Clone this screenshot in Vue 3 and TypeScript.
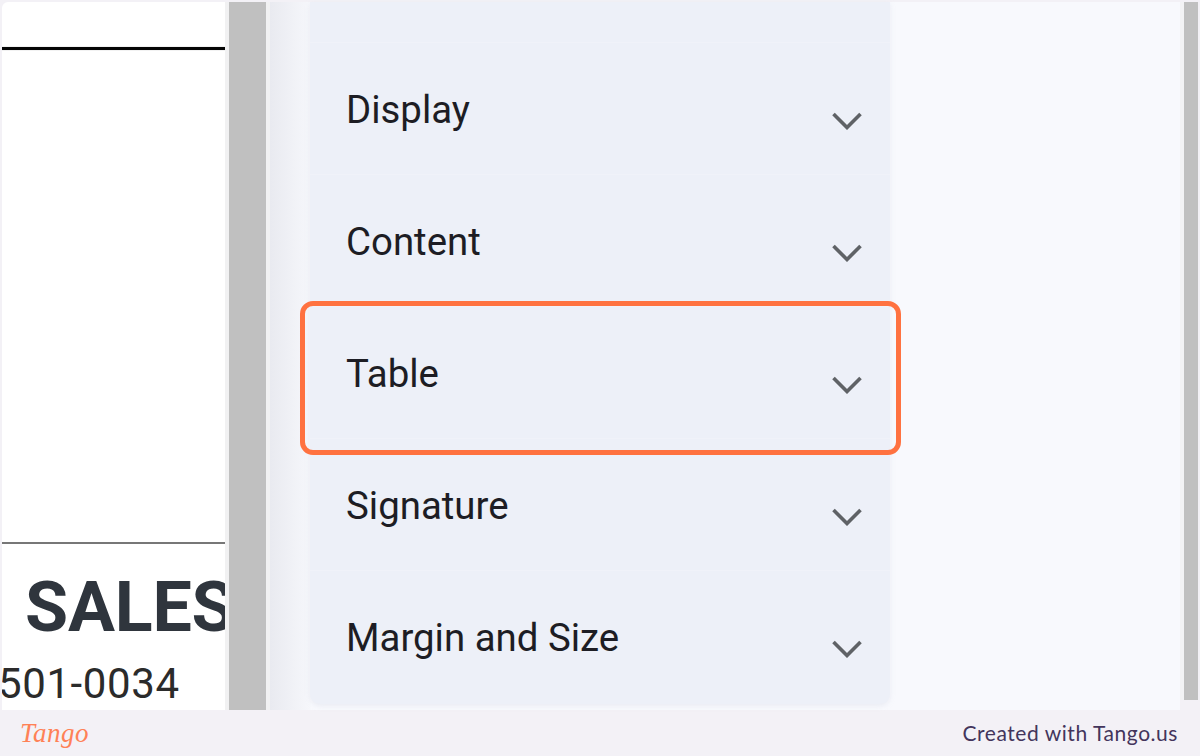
<script setup lang="ts">
const sections: string[] = ['Display', 'Content', 'Table', 'Signature', 'Margin and Size']
</script>

<template>
  <div class="page">
    <main class="stage">
      <section class="doc">
        <div class="rule-top"></div>
        <div class="rule-mid"></div>
        <div class="sales">SALES</div>
        <div class="phone">501-0034</div>
      </section>
      <div class="gutter"><div class="bar"></div></div>
      <section class="editor">
        <div class="panel">
          <div class="stub"></div>
          <div v-for="name in sections" :key="name" class="row">
            <span class="label">{{ name }}</span>
            <svg class="chev" width="30" height="18" viewBox="0 0 30 18" aria-hidden="true">
              <path d="M1.5 2 L15 15.5 L28.5 2" fill="none" stroke="#5f6266" stroke-width="3.6" />
            </svg>
            <div v-if="name === 'Table'" class="highlight"></div>
          </div>
        </div>
      </section>
      <div class="track"><div class="thumb"></div></div>
    </main>
    <footer class="foot">
      <span class="logo">Tango</span>
      <span class="credit">Created with Tango.us</span>
    </footer>
  </div>
</template>

<style>
html, body { margin: 0; background: #f3f1f6; }
</style>

<style scoped>
.page {
  width: 1200px;
  height: 756px;
  display: flex;
  flex-direction: column;
  background: #f3f1f6;
  overflow: hidden;
}
.stage {
  height: 708px;
  margin-top: 2px;
  padding-left: 2px;
  display: flex;
  flex: none;
}
.doc {
  width: 223px;
  flex: none;
  background: #fff;
  border-top-left-radius: 6px;
  overflow: hidden;
  box-sizing: border-box;
  padding-top: 45px;
}
.rule-top {
  height: 3px;
  background: #050505;
  box-shadow: 0 0 1px #777;
}
.rule-mid {
  height: 2px;
  margin-top: 492px;
  background: #777;
}
.sales {
  margin: 27px 0 0 23px;
  font: 700 70px/72px Roboto, "Liberation Sans", sans-serif;
  letter-spacing: -0.2px;
  color: #2f353d;
  white-space: nowrap;
}
.phone {
  margin: 16px 0 0 -4px;
  font: 400 42px/50px Roboto, "Liberation Sans", sans-serif;
  letter-spacing: 0.6px;
  color: #2b2b2b;
  white-space: nowrap;
}
.gutter {
  width: 45px;
  flex: none;
  box-sizing: border-box;
  padding: 0 4px;
  background: #f1f1f2;
}
.bar {
  height: 100%;
  background: #c0c0c0;
}
.editor {
  width: 910px;
  flex: none;
  background: linear-gradient(90deg, #e9eaf0 0, #f6f7fb 40px, #f8f9fd 41px);
  padding-left: 40px;
  box-sizing: border-box;
}
.panel {
  width: 580px;
  height: 702px;
  background: #edf0f8;
  border-radius: 0 0 10px 10px;
  box-shadow: 0 2px 5px rgba(210, 212, 225, 0.35);
}
.stub {
  height: 40px;
  border-bottom: 1px solid #f0f2f9;
}
.row {
  position: relative;
  height: 131px;
  border-bottom: 1px solid #f0f2f9;
  display: flex;
  align-items: center;
  justify-content: space-between;
  padding: 0 28px 0 36px;
}
.row:last-child { border-bottom: 0; }
.label {
  font: 400 38.4px/46px Roboto, "Liberation Sans", sans-serif;
  color: #1d1d24;
  margin-top: 2px;
  white-space: nowrap;
}
.chev {
  display: block;
  margin-top: 24px;
}
.highlight {
  position: absolute;
  left: -10px;
  top: -6px;
  width: 601px;
  height: 154px;
  box-sizing: border-box;
  border: 5px solid #ff7240;
  border-radius: 13px;
}
.track {
  width: 18px;
  flex: none;
  box-sizing: border-box;
  height: 698px;
  padding-left: 4px;
  background: #f3f3f5;
}
.thumb {
  width: 14px;
  height: 100%;
  background: #c0c0c0;
}
.foot {
  height: 46px;
  flex: none;
  display: flex;
  align-items: center;
  justify-content: space-between;
  padding: 0 22px 0 20px;
}
.logo {
  font: italic 400 27px/40px "Liberation Serif", serif;
  color: #ff8156;
  letter-spacing: 0.5px;
}
.credit {
  font: 400 21px/28px Lato, "Open Sans", sans-serif;
  color: #43355c;
  letter-spacing: 0.55px;
}
</style>
